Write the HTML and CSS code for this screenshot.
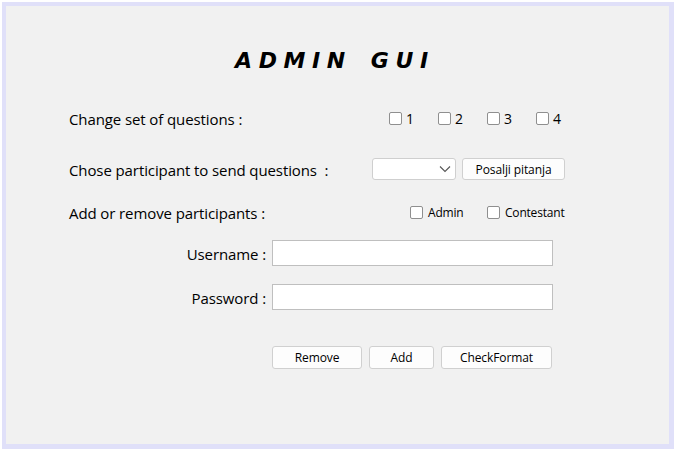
FILE: index.html
```html
<!DOCTYPE html>
<html>
<head>
<meta charset="utf-8">
<link rel="stylesheet" href="styles.css">
</head>
<body>
<div class="frame">
  <h1 class="title"><span>ADMIN</span><span>GUI</span></h1>

  <div class="row row-q">
    <span class="label w-q">Change set of questions :</span>
    <div class="checks">
      <label class="chk chk-n"><input type="checkbox"><span>1</span></label>
      <label class="chk chk-n"><input type="checkbox"><span>2</span></label>
      <label class="chk chk-n"><input type="checkbox"><span>3</span></label>
      <label class="chk chk-n last"><input type="checkbox"><span>4</span></label>
    </div>
  </div>

  <div class="row row-send">
    <span class="label w-send">Chose participant to send questions &nbsp;:</span>
    <div class="select">
      <svg width="12" height="8" viewBox="0 0 12 8"><path d="M1 1.5 L6 6.5 L11 1.5" fill="none" stroke="#555" stroke-width="1.1"/></svg>
    </div>
    <button class="btn btn-send">Posalji pitanja</button>
  </div>

  <div class="row row-add">
    <span class="label w-add">Add or remove participants :</span>
    <label class="chk chk-s chk-admin"><input type="checkbox"><span>Admin</span></label>
    <label class="chk chk-s"><input type="checkbox"><span>Contestant</span></label>
  </div>

  <div class="field row-user">
    <span class="flabel">Username :</span>
    <input class="text" type="text">
  </div>
  <div class="field row-pass">
    <span class="flabel">Password :</span>
    <input class="text" type="password">
  </div>

  <div class="actions">
    <button class="btn btn-remove">Remove</button>
    <button class="btn btn-add">Add</button>
    <button class="btn btn-check">CheckFormat</button>
  </div>
</div>
</body>
</html>
```

FILE: styles.css
```css
html, body {
  margin: 0;
  padding: 0;
  background: #ffffff;
}
body {
  font-family: "Open Sans", "Noto Sans", sans-serif;
  color: #000;
}
.frame {
  box-sizing: border-box;
  margin: 2px 0 0 2px;
  width: 672px;
  height: 447px;
  border: 4px solid #e0e0f9;
  border-right-width: 5px;
  border-bottom-width: 5px;
  background: #f1f1f1;
  padding: 42px 0 0 63px;
}
.title {
  margin: 0 0 32px 166px;
  height: 26px;
  font-family: "DejaVu Sans", sans-serif;
  font-weight: bold;
  font-style: italic;
  font-size: 22px;
  line-height: 26px;
  letter-spacing: 6.6px;
  display: flex;
  gap: 19px;
}
.row {
  display: flex;
  align-items: center;
}
.label {
  font-size: 15px;
  letter-spacing: -0.1px;
  white-space: nowrap;
  padding-top: 1px;
}
.row-q { height: 24px; margin-bottom: 28px; }
.w-q { width: 320px; }
.checks { display: flex; }
.chk {
  display: flex;
  align-items: center;
  cursor: default;
}
.chk input {
  appearance: none;
  -webkit-appearance: none;
  margin: 0;
  width: 13px;
  height: 13px;
  box-sizing: border-box;
  border: 1px solid #8f8f8f;
  border-radius: 2px;
  background: #fff;
}
.chk-n { width: 49px; font-size: 14px; }
.chk-n span { margin-left: 4px; }
.chk-n.last { width: auto; }
.row-send { height: 22px; margin-bottom: 20px; }
.w-send { width: 303px; }
.select {
  box-sizing: border-box;
  width: 84px;
  height: 22px;
  background: #fff;
  border: 1px solid #cfcfcf;
  border-radius: 3px;
  display: flex;
  align-items: center;
  justify-content: flex-end;
  padding-right: 4px;
}
.btn {
  box-sizing: border-box;
  height: 22px;
  padding: 0;
  background: #fdfdfd;
  border: 1px solid #d0d0d0;
  border-radius: 3px;
  font-family: "Open Sans", "Noto Sans", sans-serif;
  font-size: 12px;
  letter-spacing: -0.1px;
  color: #000;
}
.btn-send { width: 103px; margin-left: 6px; }
.row-add { height: 24px; margin-bottom: 16px; }
.w-add { width: 341px; }
.chk-s { font-size: 12px; letter-spacing: -0.2px; }
.chk-s span { margin-left: 5px; }
.chk-admin { width: 77px; }
.field {
  display: flex;
  align-items: center;
  height: 26px;
}
.row-user { margin-bottom: 18px; }
.row-pass { margin-bottom: 36px; }
.flabel {
  width: 197px;
  text-align: right;
  font-size: 15px;
  letter-spacing: -0.1px;
  margin-right: 6px;
  padding-top: 1px;
}
.text {
  box-sizing: border-box;
  width: 281px;
  height: 26px;
  margin: 0;
  border: 1px solid #bfbfbf;
  background: #fff;
  outline: none;
}
.actions {
  display: flex;
  gap: 7px;
  margin-left: 203px;
}
.btn-remove { width: 90px; height: 23px; }
.btn-add { width: 65px; height: 23px; }
.btn-check { width: 111px; height: 23px; }
```
